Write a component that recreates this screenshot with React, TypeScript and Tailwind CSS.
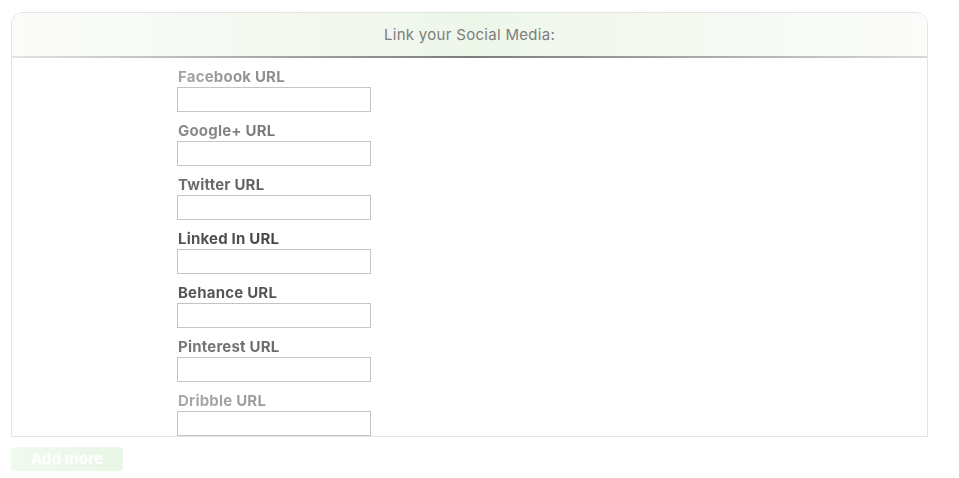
import React from "react";

const fields = [
  { label: "Facebook URL", from: "#a3a3a3", to: "#8a8a8a" },
  { label: "Google+ URL", from: "#8c8c8c", to: "#777" },
  { label: "Twitter URL", from: "#6e6e6e", to: "#5e5e5e" },
  { label: "Linked In URL", from: "#555", to: "#444" },
  { label: "Behance URL", from: "#555", to: "#555" },
  { label: "Pinterest URL", from: "#777", to: "#6a6a6a" },
  { label: "Dribble URL", from: "#aaa", to: "#999" },
];

export default function App() {
  return (
    <div
      className="w-[959px] h-[478px] bg-white pt-[12px] pl-[11px]"
      style={{ fontFamily: "Inter, 'Noto Sans', sans-serif" }}
    >
      <div className="w-[917px] h-[425px] relative rounded-t-[12px] overflow-hidden border border-[#e3e3e3] bg-white">
        <div className="absolute top-[-1px] left-0 right-0 h-px bg-gradient-to-r from-[#e6e6e6] via-[#8f8f8f] to-[#e6e6e6]" />
        <div className="h-[43px] pt-px flex items-center justify-center bg-gradient-to-r from-[#fbfcfa] via-[#eef6ea] to-[#fbfcfa] text-[15px] tracking-[0.3px] text-[#7d7d7d]">
          Link your Social Media:
        </div>
        <div className="h-[2px] bg-gradient-to-r from-[#e2e2e2] via-[#7c7c7c] to-[#d8d8d8]" />
        <div className="pl-[165px] pt-[10px] flex flex-col gap-[10px]">
          {fields.map((f) => (
            <div key={f.label} className="flex flex-col">
              <span
                className="text-[15px] tracking-[0.2px] font-bold leading-[18px] h-[18px] w-fit bg-clip-text text-transparent pl-px"
                style={{ backgroundImage: `linear-gradient(to right, ${f.from}, ${f.to})` }}
              >
                {f.label}
              </span>
              <input
                type="text"
                className="mt-[1px] w-[194px] h-[25px] shrink-0 border border-[#c4c4c4] bg-white outline-none"
              />
            </div>
          ))}
        </div>
        <div className="absolute bottom-[-1px] left-0 right-0 h-px bg-gradient-to-r from-[#d5d5d5] via-[#8a8a8a] to-[#e6e6e6]" />
      </div>
      <div className="mt-[10px] w-[112px] h-[24px] rounded-[4px] bg-gradient-to-r from-[#f0faef] to-[#e9f7e6] flex items-center justify-center text-white text-[15px] tracking-[0.2px] font-bold">
        Add more
      </div>
    </div>
  );
}
